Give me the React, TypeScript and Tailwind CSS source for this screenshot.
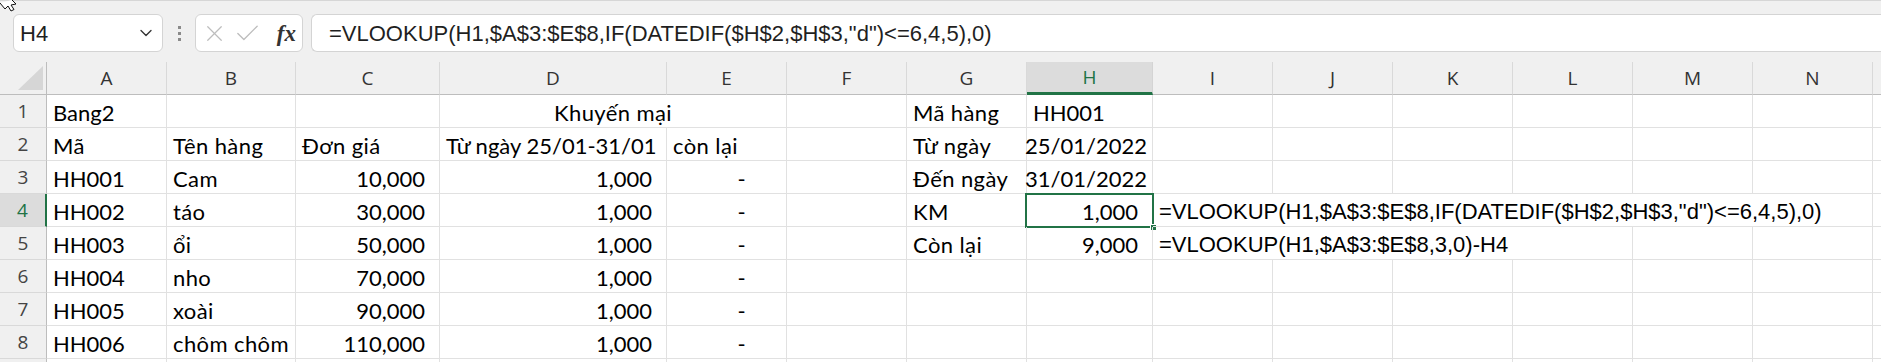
import React from 'react';
import { ChevronDown, X, Check } from 'lucide-react';

type CellDef = {
  t: string;
  cls?: string;
  span?: number;
  w?: string;
  f?: boolean;
};

const columns: { l: string; w: string }[] = [
  { l: 'A', w: 'w-[120px]' },
  { l: 'B', w: 'w-[129px]' },
  { l: 'C', w: 'w-[144px]' },
  { l: 'D', w: 'w-[227px]' },
  { l: 'E', w: 'w-[120px]' },
  { l: 'F', w: 'w-[120px]' },
  { l: 'G', w: 'w-[120px]' },
  { l: 'H', w: 'w-[126px]' },
  { l: 'I', w: 'w-[120px]' },
  { l: 'J', w: 'w-[120px]' },
  { l: 'K', w: 'w-[120px]' },
  { l: 'L', w: 'w-[120px]' },
  { l: 'M', w: 'w-[120px]' },
  { l: 'N', w: 'w-[120px]' },
  { l: 'O', w: 'w-[120px]' },
];

const num = 'justify-end pr-[14px]';
const dash = 'justify-end pr-[40px]';
const date = 'justify-end pr-[5px]';

const rows: Record<string, CellDef>[] = [
  {
    A: { t: 'Bang2' },
    D: { t: 'Khuyến mại', cls: 'justify-center', span: 2, w: 'w-[347px]' },
    G: { t: 'Mã hàng' },
    H: { t: 'HH001' },
  },
  {
    A: { t: 'Mã' },
    B: { t: 'Tên hàng' },
    C: { t: 'Đơn giá' },
    D: { t: 'Từ ngày 25/01-31/01' },
    E: { t: 'còn lại' },
    G: { t: 'Từ ngày' },
    H: { t: '25/01/2022', cls: date },
  },
  {
    A: { t: 'HH001' },
    B: { t: 'Cam' },
    C: { t: '10,000', cls: num },
    D: { t: '1,000', cls: num },
    E: { t: '-', cls: dash },
    G: { t: 'Đến ngày' },
    H: { t: '31/01/2022', cls: date },
  },
  {
    A: { t: 'HH002' },
    B: { t: 'táo' },
    C: { t: '30,000', cls: num },
    D: { t: '1,000', cls: num },
    E: { t: '-', cls: dash },
    G: { t: 'KM' },
    H: { t: '1,000', cls: num },
    I: { t: '=VLOOKUP(H1,$A$3:$E$8,IF(DATEDIF($H$2,$H$3,"d")<=6,4,5),0)', span: 6, w: 'w-[720px]', f: true },
  },
  {
    A: { t: 'HH003' },
    B: { t: 'ổi' },
    C: { t: '50,000', cls: num },
    D: { t: '1,000', cls: num },
    E: { t: '-', cls: dash },
    G: { t: 'Còn lại' },
    H: { t: '9,000', cls: num },
    I: { t: '=VLOOKUP(H1,$A$3:$E$8,3,0)-H4', span: 4, w: 'w-[480px]', f: true },
  },
  {
    A: { t: 'HH004' },
    B: { t: 'nho' },
    C: { t: '70,000', cls: num },
    D: { t: '1,000', cls: num },
    E: { t: '-', cls: dash },
  },
  {
    A: { t: 'HH005' },
    B: { t: 'xoài' },
    C: { t: '90,000', cls: num },
    D: { t: '1,000', cls: num },
    E: { t: '-', cls: dash },
  },
  {
    A: { t: 'HH006' },
    B: { t: 'chôm chôm' },
    C: { t: '110,000', cls: num },
    D: { t: '1,000', cls: num },
    E: { t: '-', cls: dash },
  },
  {},
];

const FormulaBar: React.FC = () => (
  <div className="h-[62px] bg-[#f0f0f0] border-t border-[#d6d6d6] flex items-start pt-[13px]">
    <div className="ml-[13px] w-[150px] h-[38px] rounded-[6px] border border-[#d4d4d4] bg-white flex items-center justify-between pl-[6px] pr-[6px]">
      <span className="font-['Liberation_Sans',sans-serif] text-[22px] text-[#1f1f1f]">H4</span>
      <ChevronDown className="w-[20px] h-[20px] text-[#333]" strokeWidth={1.6} />
    </div>
    <div className="w-[32px] h-[38px] flex flex-col items-center justify-center gap-[3px]">
      <span className="w-[3px] h-[3px] bg-[#8a8a8a]" />
      <span className="w-[3px] h-[3px] bg-[#8a8a8a]" />
      <span className="w-[3px] h-[3px] bg-[#8a8a8a]" />
    </div>
    <div className="w-[108px] h-[38px] rounded-[6px] border border-[#d4d4d4] bg-white flex items-center pl-[5px] pr-[6px]">
      <X className="w-[27px] h-[27px] text-[#bdbdbd]" strokeWidth={1.1} />
      <Check className="w-[29px] h-[29px] text-[#bdbdbd] ml-[5px]" strokeWidth={1.1} />
      <span className="ml-auto font-['Liberation_Serif',serif] italic font-bold text-[23px] text-[#333] leading-none">fx</span>
    </div>
    <div className="ml-[8px] flex-1 h-[38px] rounded-l-[6px] border border-r-0 border-[#d4d4d4] bg-white flex items-center pl-[17px]">
      <span className="font-['Liberation_Sans',sans-serif] text-[22px] text-[#1f1f1f] whitespace-nowrap">
        =VLOOKUP(H1,$A$3:$E$8,IF(DATEDIF($H$2,$H$3,"d")&lt;=6,4,5),0)
      </span>
    </div>
  </div>
);

const HeaderRow: React.FC = () => (
  <div className="flex h-[33px]">
    <div className="w-[47px] shrink-0 h-[33px] bg-[#f0f0f0] border-b border-r border-[#bdbdbd] relative">
      <svg className="absolute right-[3px] bottom-[4px]" width="25" height="24" viewBox="0 0 25 24">
        <polygon points="25,0 25,24 0,24" fill="#d6d6d6" />
      </svg>
    </div>
    {columns.map((c) =>
      c.l === 'H' ? (
        <div
          key={c.l}
          className={`${c.w} shrink-0 h-[33px] bg-[#dcdcdc] border-r border-[#d4d4d4] border-b-[3px] border-b-[#217346] flex items-center justify-center font-['Open_Sans',sans-serif] text-[19px] text-[#217346]`}
        >
          {c.l}
        </div>
      ) : (
        <div
          key={c.l}
          className={`${c.w} shrink-0 h-[33px] bg-[#f0f0f0] border-r border-[#d9d9d9] border-b border-b-[#bdbdbd] flex items-center justify-center font-['Open_Sans',sans-serif] text-[19px] text-[#333]`}
        >
          {c.l}
        </div>
      )
    )}
  </div>
);

const DataRow: React.FC<{ n: number; data: Record<string, CellDef> }> = ({ n, data }) => {
  const active = n === 4;
  const out: React.ReactNode[] = [];
  let skip = 0;
  columns.forEach((c) => {
    if (skip > 0) {
      skip -= 1;
      return;
    }
    const cell = data[c.l];
    if (cell?.span) skip = cell.span - 1;
    const width = cell?.w ?? c.w;
    const selected = active && c.l === 'H';
    // Lato is a bit narrower than the sheet's font for letters, not for digits
    const track = cell && !/\d/.test(cell.t) ? 'tracking-[0.4px]' : 'tracking-normal';
    out.push(
      <div
        key={c.l}
        className={`${width} shrink-0 h-[33px] border-r border-b border-[#e1e1e1] flex items-center pt-[2px] whitespace-nowrap relative ${
          cell?.cls ?? 'pl-[6px]'
        } ${
          cell?.f
            ? "font-['Liberation_Sans',sans-serif] text-[22px]"
            : `font-['Lato',sans-serif] text-[22px] ${track}`
        } text-black`}
      >
        {cell?.t}
        {selected && (
          <div className="absolute -left-[2px] -top-[1px] w-[129px] h-[35px] border-2 border-[#217346] pointer-events-none">
            <span className="absolute -right-[5px] -bottom-[5px] w-[7px] h-[7px] bg-[#217346] border border-white" />
          </div>
        )}
      </div>
    );
  });

  return (
    <div className="flex h-[33px]">
      <div
        className={`w-[47px] shrink-0 h-[33px] border-b border-[#d9d9d9] flex items-center justify-center font-['Open_Sans',sans-serif] text-[19px] ${
          active
            ? 'bg-[#dcdcdc] text-[#217346] border-r-2 border-r-[#217346]'
            : 'bg-[#f0f0f0] text-[#444] border-r border-r-[#bdbdbd]'
        }`}
      >
        {n}
      </div>
      {out}
    </div>
  );
};

export default function App() {
  return (
    <div className="w-[1881px] h-[362px] overflow-hidden bg-white relative">
      <FormulaBar />
      <HeaderRow />
      {rows.map((r, i) => (
        <DataRow key={i} n={i + 1} data={r} />
      ))}
      <svg className="absolute left-0 top-0" width="18" height="12" viewBox="0 0 18 12">
        <path d="M0 3 L5 9 L8 6 L11 11 L14 9.5 L11 5 L16 4 L12 0" fill="#fff" stroke="#111" strokeWidth="1" />
      </svg>
    </div>
  );
}
